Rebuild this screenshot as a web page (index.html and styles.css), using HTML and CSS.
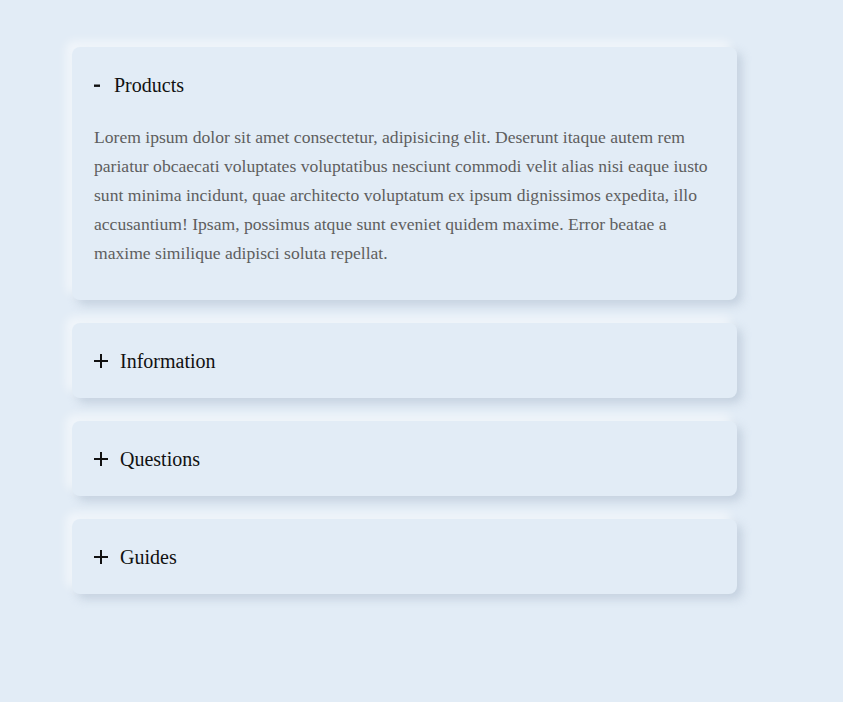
FILE: index.html
```html
<!DOCTYPE html>
<html>
<head>
<meta charset="utf-8">
<link rel="stylesheet" href="styles.css">
</head>
<body>
<div class="accordion">
  <div class="card open">
    <div class="head">
      <svg class="icon" width="14" height="14" viewBox="0 0 14 14"><rect x="0" y="6.5" width="6" height="2.4" fill="#111"/></svg>
      <span class="title minus-title">Products</span>
    </div>
    <p class="body">Lorem ipsum dolor sit amet consectetur, adipisicing elit. Deserunt itaque autem rem pariatur obcaecati voluptates voluptatibus nesciunt commodi velit alias nisi eaque iusto sunt minima incidunt, quae architecto voluptatum ex ipsum dignissimos expedita, illo accusantium! Ipsam, possimus atque sunt eveniet quidem maxime. Error beatae a maxime similique adipisci soluta repellat.</p>
  </div>
  <div class="card">
    <div class="head">
      <svg class="icon" width="14" height="14" viewBox="0 0 14 14"><path d="M7 0V14M0 7H14" stroke="#111" stroke-width="2"/></svg>
      <span class="title">Information</span>
    </div>
  </div>
  <div class="card">
    <div class="head">
      <svg class="icon" width="14" height="14" viewBox="0 0 14 14"><path d="M7 0V14M0 7H14" stroke="#111" stroke-width="2"/></svg>
      <span class="title">Questions</span>
    </div>
  </div>
  <div class="card">
    <div class="head">
      <svg class="icon" width="14" height="14" viewBox="0 0 14 14"><path d="M7 0V14M0 7H14" stroke="#111" stroke-width="2"/></svg>
      <span class="title">Guides</span>
    </div>
  </div>
</div>
</body>
</html>
```
FILE: styles.css
```css
html, body {
  margin: 0;
  padding: 0;
  background: #e2ecf6;
  font-family: "Liberation Serif", "Times New Roman", serif;
}
body {
  min-height: 100vh;
}
.accordion {
  width: 665px;
  margin-left: 72px;
  padding-top: 47px;
  padding-bottom: 60px;
  display: flex;
  flex-direction: column;
  gap: 23px;
}
.card {
  background: #e2ecf6;
  border-radius: 8px;
  padding: 0 22px;
  box-shadow: -6px -6px 10px rgba(255,255,255,0.55), 5px 5px 10px rgba(160,175,195,0.45);
}
.head {
  height: 75px;
  display: flex;
  align-items: center;
  color: #111;
}
.icon {
  flex: none;
  display: block;
}
.title {
  font-size: 20px;
  margin-left: 12px;
  padding-top: 1px;
}
.minus-title {
  margin-left: 6px;
}
.open .head {
  height: 76px;
}
.body {
  margin: 0;
  padding-bottom: 32px;
  font-size: 17.6px;
  line-height: 29px;
  color: #5e5e5e;
}
```
